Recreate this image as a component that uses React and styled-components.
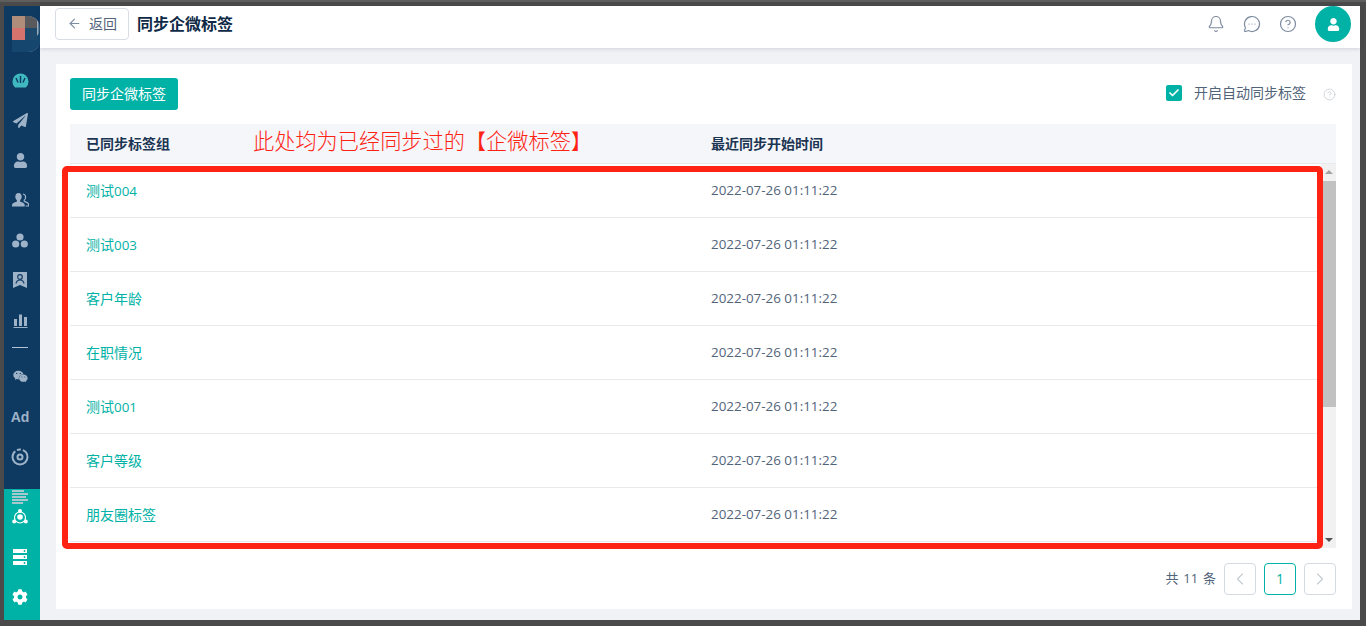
import React from "react";
import styled, { createGlobalStyle } from "styled-components";
import { ArrowLeft, Bell, MessageCircleMore, CircleHelp, Check, ChevronLeft, ChevronRight } from "lucide-react";
import { FaUser, FaPaperPlane, FaCog, FaWeixin } from "react-icons/fa";

const rows = [
  { name: "测试", num: "004" },
  { name: "测试", num: "003" },
  { name: "客户年龄" },
  { name: "在职情况" },
  { name: "测试", num: "001" },
  { name: "客户等级" },
  { name: "朋友圈标签" },
];

const GlobalStyle = createGlobalStyle`
  html, body {
    margin: 0;
    padding: 0;
    background: #4a4a4a;
    overflow: hidden;
  }
  * {
    box-sizing: border-box;
  }
`;

const Frame = styled.div`
  width: 1366px;
  height: 626px;
  padding: 6px 6px 6px 4px;
  background: #4a4a4a;
  border-top: 2px solid #5e5e5e;
  display: flex;
  font-family: "Open Sans", "Noto Sans CJK SC", sans-serif;
  color: #1f3a57;
  overflow: hidden;
`;

const Sidebar = styled.aside`
  width: 36px;
  flex: none;
  display: flex;
  flex-direction: column;
  margin-top: -2px;
`;

const SideDark = styled.div`
  height: 483px;
  background: #0e3a62;
  padding-right: 4px;
  display: flex;
  flex-direction: column;
  align-items: center;
  color: #9fb3c8;
`;

const SideTeal = styled.div`
  flex: 1;
  background: #00b2a6;
  padding-right: 4px;
  display: flex;
  flex-direction: column;
  align-items: center;
  color: #fff;
  overflow: hidden;
`;

const Logo = styled.div`
  position: relative;
  width: 28px;
  height: 36px;
  margin: 10px -4px 8px 8px;
  align-self: flex-start;
  display: grid;
  grid-template-columns: 13px 12px;
  grid-template-rows: 12px 12px;
  overflow: hidden;
  border-radius: 0 12px 12px 0;
  background: linear-gradient(90deg, #3a6080, #a9b9c6 90%, #0e3a62);
  box-shadow: inset 0 -12px 0 #14466e;
`;

const Pixel = styled.span`
  background: ${(p) => p.$c};
`;

const SideItem = styled.div`
  height: 40px;
  flex: none;
  margin-top: ${(p) => p.$shift || 0}px;
  display: flex;
  align-items: center;
  justify-content: center;
  font-size: 15px;
`;

const AdText = styled.span`
  font-family: "Liberation Sans", sans-serif;
  font-weight: 700;
  font-size: 14px;
`;

const SideRule = styled.div`
  width: 16px;
  height: 1px;
  background: #b4c3d2;
  margin: 7px 0 8px;
`;

const ClippedLines = styled.div`
  width: 16px;
  height: 8px;
  flex: none;
  display: flex;
  flex-direction: column;
  gap: 1.5px;
  padding-top: 1px;
`;

const ClippedLine = styled.span`
  flex: none;
  height: 1.5px;
  width: ${(p) => p.$w}px;
  background: #a7c8cf;
`;

const Main = styled.div`
  flex: 1;
  min-width: 0;
  display: flex;
  flex-direction: column;
  background: #f1f2f6;
  margin-top: -2px;
`;

const Header = styled.header`
  height: 42px;
  flex: none;
  background: #fff;
  box-shadow: 0 1px 4px rgba(30, 50, 80, 0.16);
  display: flex;
  align-items: center;
  padding: 0 9px 6px 15px;
`;

const BackButton = styled.button`
  width: 74px;
  height: 32px;
  border: 1px solid #d8dce3;
  border-radius: 4px;
  background: #fff;
  display: flex;
  align-items: center;
  justify-content: center;
  gap: 7px;
  font-family: inherit;
  font-size: 14px;
  color: #52647a;
  padding: 0 0 2px;
`;

const PageTitle = styled.h1`
  margin: 0 0 2px 8px;
  font-size: 16px;
  font-weight: 700;
  color: #0f2a47;
  flex: 1;
`;

const HeaderIcons = styled.div`
  display: flex;
  align-items: center;
  gap: 18px;
  color: #7d8c9f;
`;

const Avatar = styled.div`
  width: 36px;
  height: 36px;
  border-radius: 50%;
  background: #00b2a6;
  color: #fff;
  display: flex;
  align-items: center;
  justify-content: center;
  font-size: 13px;
`;

const Content = styled.main`
  flex: 1;
  min-height: 0;
  padding: 16px 8px 11px 16px;
  display: flex;
`;

const Card = styled.section`
  position: relative;
  flex: 1;
  min-width: 0;
  background: #fff;
  padding: 14px 16px 0 14px;
  display: flex;
  flex-direction: column;
`;

const Toolbar = styled.div`
  height: 32px;
  flex: none;
  display: flex;
  align-items: center;
  justify-content: space-between;
  margin-bottom: 14px;
`;

const SyncButton = styled.button`
  width: 108px;
  height: 32px;
  border: 0;
  border-radius: 3px;
  background: #00b2a6;
  color: #fff;
  font-family: inherit;
  font-size: 14px;
  padding: 0 0 2px;
`;

const AutoSync = styled.label`
  display: flex;
  align-items: center;
  font-size: 14px;
  color: #52647a;
  padding-bottom: 2px;
`;

const AutoSyncText = styled.span`
  margin-bottom: 2px;
`;

const CheckBox = styled.span`
  width: 16px;
  height: 16px;
  border-radius: 2px;
  background: #00b2a6;
  color: #fff;
  display: flex;
  align-items: center;
  justify-content: center;
  margin-right: 12px;
`;

const HelpHint = styled.span`
  display: flex;
  margin: 2px 0 0 17px;
  color: #c8ccd2;
`;

const TableHead = styled.div`
  height: 40px;
  flex: none;
  background: #f4f6fa;
  border-bottom: 1px solid #e8e9ec;
  display: grid;
  grid-template-columns: 625px 1fr;
  align-items: center;
  padding: 0 0 2px 16px;
  font-size: 14px;
  font-weight: 600;
  color: #1c3553;
`;

const TableBody = styled.div`
  height: 384px;
  flex: none;
  display: flex;
  overflow: hidden;
`;

const Rows = styled.div`
  flex: 1;
  min-width: 0;
`;

const Row = styled.div`
  height: 54px;
  border-bottom: 1px solid #e8e9ec;
  display: grid;
  grid-template-columns: 625px 1fr;
  align-items: center;
  padding: 0 0 2px 16px;
  font-size: 14px;
  color: #52647a;
`;

const TagLink = styled.a`
  color: #00b2a6;
`;

const Num = styled.span`
  font-size: 13.4px;
`;

const DateCell = styled(Num)`
  margin-top: 1px;
`;

const ScrollTrack = styled.div`
  position: relative;
  width: 15px;
  flex: none;
  background: #f1f1f1;
`;

const ScrollThumb = styled.div`
  position: absolute;
  top: 17px;
  left: 0;
  right: 0;
  height: 226px;
  background: #c1c1c1;
`;

const ScrollArrow = styled.span`
  position: absolute;
  left: 4px;
  width: 0;
  height: 0;
  border-left: 4px solid transparent;
  border-right: 4px solid transparent;
  ${(p) =>
    p.$up
      ? "top: 6px; border-bottom: 4px solid #a3a3a3;"
      : "bottom: 6px; border-top: 4px solid #505050;"}
`;

const Pager = styled.div`
  flex: 1;
  display: flex;
  align-items: center;
  justify-content: flex-end;
  gap: 8px;
  font-size: 13px;
  color: #52647a;
`;

const PagerTotal = styled.span`
  word-spacing: 1.5px;
  margin-bottom: 2px;
`;

const PageButton = styled.button`
  width: 32px;
  height: 32px;
  border-radius: 4px;
  border: 1px solid ${(p) => (p.$active ? "#00b2a6" : "#d5dae1")};
  background: #fff;
  color: ${(p) => (p.$active ? "#00b2a6" : "#c3c8d0")};
  display: flex;
  align-items: center;
  justify-content: center;
  font-family: inherit;
  font-size: 14px;
  padding: 0;
`;

const RedBox = styled.div`
  position: absolute;
  left: 6px;
  top: 102px;
  width: 1261px;
  height: 383px;
  border: 6px solid #ff2314;
  border-radius: 5px;
  pointer-events: none;
`;

const Annotation = styled.div`
  position: absolute;
  left: 197px;
  top: 61px;
  font-size: 21.2px;
  font-weight: 300;
  line-height: 32px;
  color: #ff2314;
  white-space: nowrap;
`;

const Gauge = () => (
  <svg width="17" height="15" viewBox="0 0 17 15">
    <path fill="#3fb8c0" d="M8.5 0.5a8 8 0 0 0-8 8c0 2.5 1 4.6 2.6 6h10.8a8 8 0 0 0 2.6-6 8 8 0 0 0-8-8z" />
    <path d="M8.5 3v7M4 5l2 4.5M13 5l-2 4.5" stroke="#0e3a62" strokeWidth="1.4" fill="none" />
  </svg>
);

const UserGroup = () => (
  <svg width="17" height="16" viewBox="0 0 17 16" fill="currentColor">
    <path d="M6.5 1c2 0 3.2 1.6 3.2 3.6 0 1.6-.7 3-1.6 3.6v1.2c1 .5 4 1.4 4.4 2.6.2.6.2 1.6.2 2.6H0c0-1 0-2 .3-2.6.4-1.2 3.6-2.1 4.6-2.6V8.2C4 7.6 3.3 6.2 3.3 4.6 3.3 2.6 4.5 1 6.5 1z" />
    <path d="M11 2c1.6.3 2.6 1.5 2.6 3.2 0 1.3-.6 2.5-1.4 3v1c1 .5 3.8 1.4 4.2 2.5.2.5.2 1.3.2 2.3h-3" fill="none" stroke="currentColor" strokeWidth="1.2" />
  </svg>
);

const Cluster = () => (
  <svg width="16" height="15" viewBox="0 0 16 15" fill="currentColor">
    <circle cx="8" cy="4" r="3.6" />
    <circle cx="3.7" cy="11" r="3.6" />
    <circle cx="12.3" cy="11" r="3.6" />
  </svg>
);

const Badge = () => (
  <svg width="14" height="16" viewBox="0 0 14 16" fill="currentColor">
    <path d="M0 0h14v16l-7-3-7 3z" />
    <circle cx="7" cy="5" r="2.3" fill="none" stroke="#0e3a62" strokeWidth="1.2" />
    <path d="M3 11.5c.5-2.5 2-3.5 4-3.5s3.5 1 4 3.5" fill="none" stroke="#0e3a62" strokeWidth="1.2" />
  </svg>
);

const Bars = () => (
  <svg width="15" height="15" viewBox="0 0 15 15" fill="currentColor">
    <path d="M1 6h3v7H1zM6 1.5h3V13H6zM11 4h3v9h-3zM.5 14h14v1H.5z" />
  </svg>
);

const Disc = () => (
  <svg width="18" height="18" viewBox="0 0 18 18" fill="none" stroke="currentColor">
    <circle cx="9" cy="9" r="7.5" strokeWidth="2" strokeDasharray="30 2 4 2" />
    <circle cx="9" cy="9" r="2.5" strokeWidth="2" />
  </svg>
);

const Orbit = () => (
  <svg width="16" height="16" viewBox="0 0 16 16" fill="none" stroke="#fff">
    <circle cx="8" cy="8.5" r="5.5" strokeWidth="1.2" />
    <circle cx="8" cy="8" r="2.8" fill="#fff" stroke="none" />
    <circle cx="8" cy="2" r="2" fill="#fff" stroke="none" />
    <circle cx="2.2" cy="12.5" r="2" fill="#fff" stroke="none" />
    <circle cx="13.8" cy="12.5" r="2" fill="#fff" stroke="none" />
  </svg>
);

const Servers = () => (
  <svg width="14" height="16" viewBox="0 0 14 16" fill="#fff">
    <path d="M0 0h14v4H0zM0 6h14v4H0zM0 12h14v4H0z" />
    <circle cx="11.5" cy="2" r="0.9" fill="#00b2a6" />
    <circle cx="11.5" cy="8" r="0.9" fill="#00b2a6" />
    <circle cx="11.5" cy="14" r="0.9" fill="#00b2a6" />
  </svg>
);

export default function App() {
  return (
    <>
      <GlobalStyle />
      <Frame>
        <Sidebar>
          <SideDark>
            <Logo>
              <Pixel $c="#b08c7a" />
              <Pixel $c="#5a5a5e" />
              <Pixel $c="#d6736c" />
              <Pixel $c="#1d4a6c" />
            </Logo>
            <SideItem><Gauge /></SideItem>
            <SideItem><FaPaperPlane /></SideItem>
            <SideItem><FaUser /></SideItem>
            <SideItem><UserGroup /></SideItem>
            <SideItem><Cluster /></SideItem>
            <SideItem><Badge /></SideItem>
            <SideItem><Bars /></SideItem>
            <SideRule />
            <SideItem><FaWeixin /></SideItem>
            <SideItem $shift={1}><AdText>Ad</AdText></SideItem>
            <SideItem><Disc /></SideItem>
          </SideDark>
          <SideTeal>
            <ClippedLines>
              <ClippedLine $w={12} />
              <ClippedLine $w={16} />
              <ClippedLine $w={14} />
              <ClippedLine $w={16} />
              <ClippedLine $w={11} />
            </ClippedLines>
            <SideItem><Orbit /></SideItem>
            <SideItem><Servers /></SideItem>
            <SideItem><FaCog size={16} /></SideItem>
          </SideTeal>
        </Sidebar>
        <Main>
          <Header>
            <BackButton>
              <ArrowLeft size={15} strokeWidth={1.7} color="#7d8c9f" />
              返回
            </BackButton>
            <PageTitle>同步企微标签</PageTitle>
            <HeaderIcons>
              <Bell size={18} strokeWidth={1.6} />
              <MessageCircleMore size={18} strokeWidth={1.6} />
              <CircleHelp size={18} strokeWidth={1.6} />
              <Avatar><FaUser /></Avatar>
            </HeaderIcons>
          </Header>
          <Content>
            <Card>
              <Toolbar>
                <SyncButton>同步企微标签</SyncButton>
                <AutoSync>
                  <CheckBox><Check size={12} strokeWidth={3.5} /></CheckBox>
                  <AutoSyncText>开启自动同步标签</AutoSyncText>
                  <HelpHint><CircleHelp size={13} strokeWidth={1.5} /></HelpHint>
                </AutoSync>
              </Toolbar>
              <TableHead>
                <span>已同步标签组</span>
                <span>最近同步开始时间</span>
              </TableHead>
              <TableBody>
                <Rows>
                  {rows.map((row) => (
                    <Row key={row.name + row.num}>
                      <TagLink>
                        {row.name}
                        {row.num && <Num>{row.num}</Num>}
                      </TagLink>
                      <DateCell>2022-07-26 01:11:22</DateCell>
                    </Row>
                  ))}
                </Rows>
                <ScrollTrack>
                  <ScrollArrow $up />
                  <ScrollThumb />
                  <ScrollArrow />
                </ScrollTrack>
              </TableBody>
              <Pager>
                <PagerTotal>共 11 条</PagerTotal>
                <PageButton><ChevronLeft size={20} strokeWidth={1.3} /></PageButton>
                <PageButton $active>1</PageButton>
                <PageButton><ChevronRight size={20} strokeWidth={1.3} /></PageButton>
              </Pager>
              <Annotation>此处均为已经同步过的【企微标签】</Annotation>
              <RedBox />
            </Card>
          </Content>
        </Main>
      </Frame>
    </>
  );
}
